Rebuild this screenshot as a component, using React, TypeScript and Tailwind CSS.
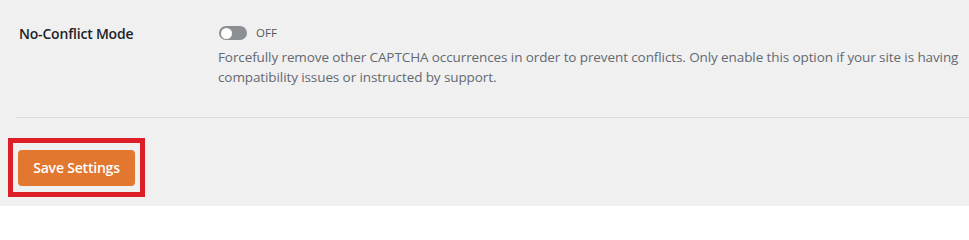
import React from "react";

export default function App() {
  return (
    <div
      className="w-[969px] h-[206px] bg-[#f0f0f1] overflow-hidden"
      style={{ fontFamily: '"Open Sans", "Noto Sans", "Liberation Sans", sans-serif' }}
    >
      <div className="flex pt-[23px] pb-[30px] pl-[19px]">
        <div className="w-[199px] shrink-0 h-[20px] leading-[22px] text-[14px] font-semibold text-[#1d2327] tracking-[-0.2px]">
          No-Conflict Mode
        </div>
        <div className="flex flex-col">
          <div className="flex items-center h-[20px] gap-[9px] pl-[1px]">
            <span className="relative inline-block w-[28px] h-[14px] rounded-full bg-[#8c8f94]">
              <span className="absolute left-[2px] top-[1.5px] w-[11px] h-[11px] rounded-full bg-white" />
            </span>
            <span className="text-[11.5px] font-medium text-[#50575e] leading-none">OFF</span>
          </div>
          <p className="mt-[4px] w-[750px] text-[13.5px] leading-[20px] text-[#646970] tracking-[-0.1px]">
            Forcefully remove other CAPTCHA occurrences in order to prevent conflicts. Only enable this option if your site is having compatibility issues or instructed by support.
          </p>
        </div>
      </div>
      <div className="ml-[16px] border-t border-[#dcdcde]" />
      <div className="mt-[20px] ml-[8px] w-[137px] h-[59px] border-[5px] border-[#dc1f26] flex items-center justify-center">
        <button className="w-[117px] h-[36px] rounded-[4px] bg-[#e27730] text-white text-[14px] font-semibold tracking-[-0.2px]">
          Save Settings
        </button>
      </div>
    </div>
  );
}
